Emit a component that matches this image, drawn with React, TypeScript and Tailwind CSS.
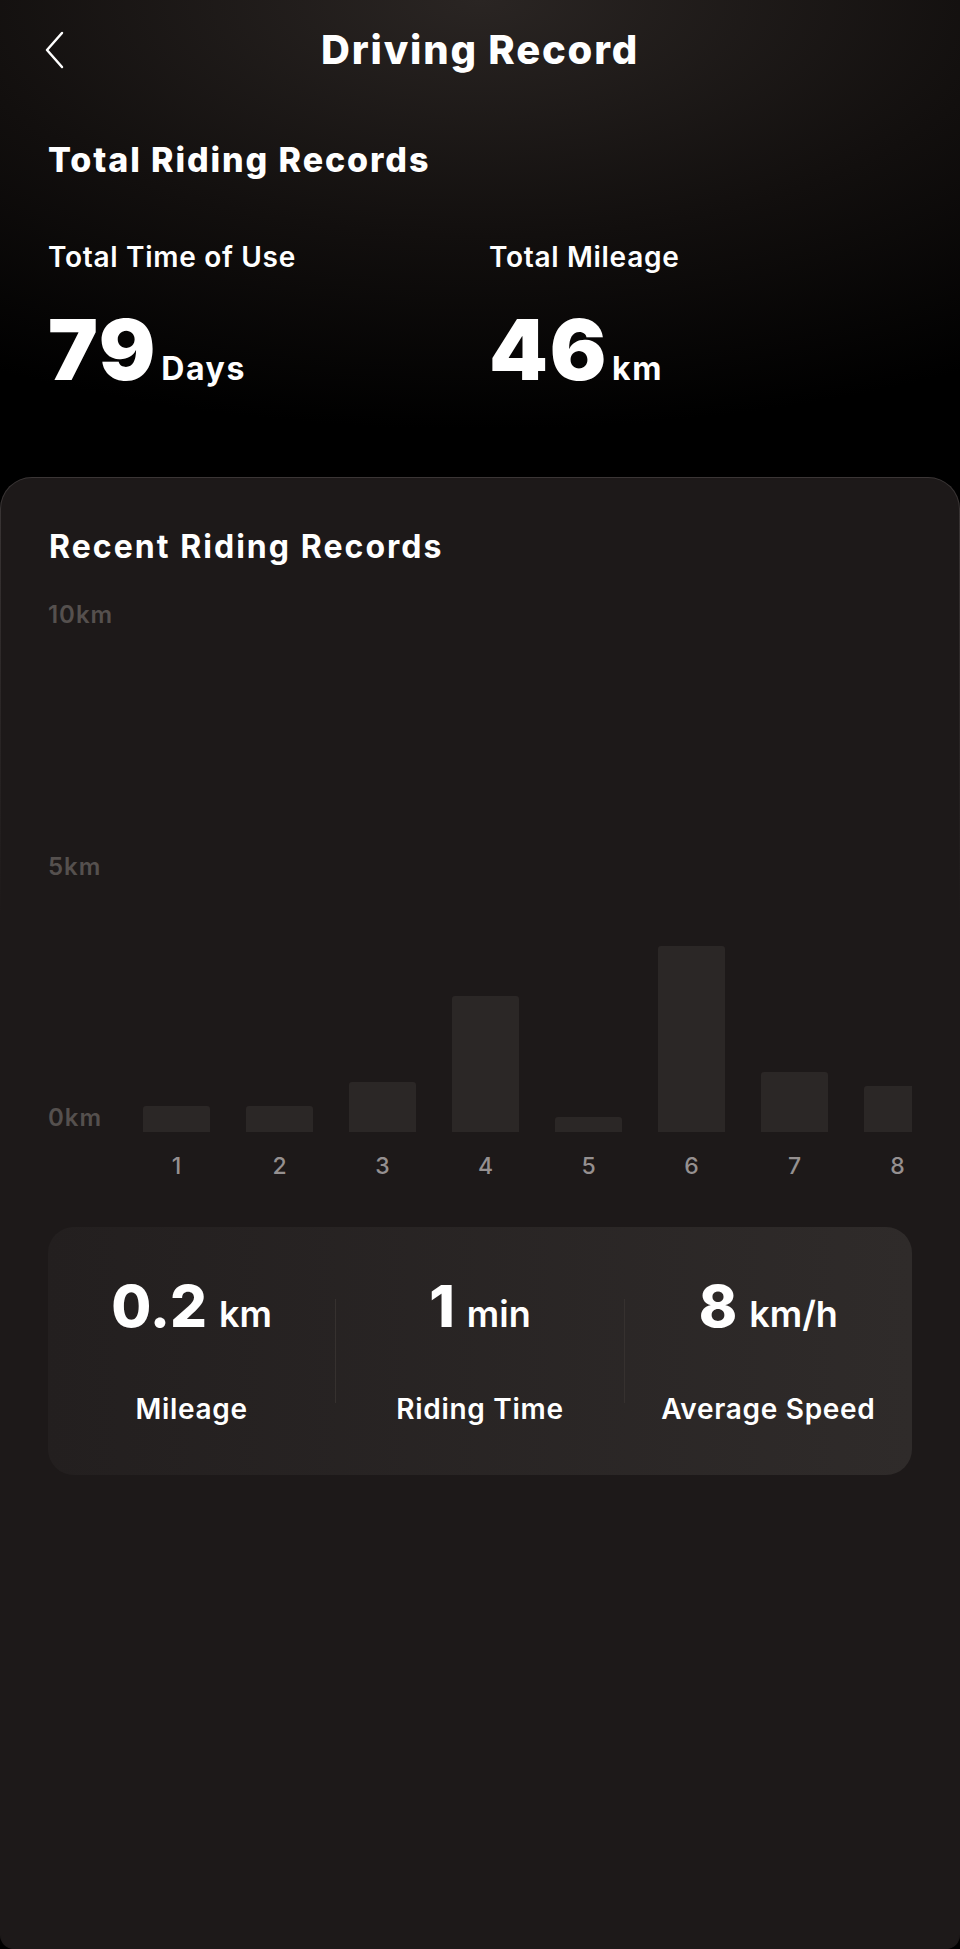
import React from 'react';

const bars = [
  { label: '1', h: 26 },
  { label: '2', h: 26 },
  { label: '3', h: 50 },
  { label: '4', h: 136 },
  { label: '5', h: 15 },
  { label: '6', h: 186 },
  { label: '7', h: 60 },
  { label: '8', h: 46 },
];

const stats = [
  { value: '0.2', unit: 'km', label: 'Mileage' },
  { value: '1', unit: 'min', label: 'Riding Time' },
  { value: '8', unit: 'km/h', label: 'Average Speed' },
];

export default function App() {
  return (
    <div className="flex min-h-[1949px] flex-col bg-black font-['Inter','Noto_Sans',sans-serif] text-white">
      {/* Top: totals */}
      <div className="h-[477px] bg-[radial-gradient(ellipse_100%_90%_at_50%_0%,#2a2523_0%,#120f0e_55%,#000_100%)]">
        <div className="grid h-[100px] grid-cols-[1fr_auto_1fr] items-center">
          <div className="pl-[45px]">
            <svg width="20" height="38" viewBox="0 0 20 38" fill="none">
              <polyline points="17,2 2,19 17,36" stroke="white" strokeWidth="2.5" strokeLinecap="round" strokeLinejoin="round" />
            </svg>
          </div>
          <h1 className="text-[40px] font-extrabold leading-none tracking-[0.045em]">Driving Record</h1>
          <div />
        </div>

        <div className="px-12">
          <h2 className="mt-[43px] text-[34px] font-extrabold leading-none tracking-[0.056em]">Total Riding Records</h2>
          <div className="mt-[66px] grid grid-cols-[441px_1fr]">
            <div>
              <p className="text-[28px] font-semibold leading-none tracking-[0.025em]">Total Time of Use</p>
              <div className="mt-[37px] flex items-baseline">
                <span className="text-[84px] font-black leading-none tracking-[0.02em]">79</span>
                <span className="ml-1 text-[32px] font-bold leading-none tracking-[0.05em]">Days</span>
              </div>
            </div>
            <div>
              <p className="text-[28px] font-semibold leading-none tracking-[0.025em]">Total Mileage</p>
              <div className="mt-[37px] flex items-baseline">
                <span className="text-[84px] font-black leading-none tracking-[0.02em]">46</span>
                <span className="ml-1 text-[32px] font-bold leading-none tracking-[0.05em]">km</span>
              </div>
            </div>
          </div>
        </div>
      </div>

      {/* Recent records card */}
      <div className="flex flex-1 flex-col rounded-t-[32px] rounded-b-[14px] bg-linear-to-b from-[#3b3636] via-[#1d1919] via-30% to-[#1d1919] px-px pt-px">
        <div className="flex-1 rounded-t-[31px] rounded-b-[14px] bg-[#1d1919]">
          <h2 className="pl-12 pt-[53px] text-[32px] font-bold leading-none tracking-[0.064em]">Recent Riding Records</h2>

          <div className="mt-[39px] flex pl-[47px]">
            <div className="flex h-[529px] w-[77px] flex-col justify-between text-[24px] font-semibold leading-[26px] tracking-[0.04em] text-[#55504e]">
              <span>10km</span>
              <span>5km</span>
              <span>0km</span>
            </div>
            <div className="w-[787px] overflow-hidden">
              <div className="flex h-[530px] items-end">
                {bars.map(b => (
                  <div key={b.label} className="flex w-[103px] shrink-0 justify-center">
                    <div className="w-[67px] rounded-t-[3px] bg-[#2b2726]" style={{ height: b.h }} />
                  </div>
                ))}
              </div>
              <div className="mt-[21px] flex">
                {bars.map(b => (
                  <span key={b.label} className="w-[103px] shrink-0 text-center text-[23px] font-medium leading-[26px] text-[#959090]">
                    {b.label}
                  </span>
                ))}
              </div>
            </div>
          </div>

          <div className="mx-[47px] mt-12 flex h-[248px] items-center rounded-[26px] bg-linear-to-r from-[#231f1f] to-[#2f2b2a]">
            {stats.map((s, i) => (
              <React.Fragment key={s.label}>
                {i > 0 && <div className="h-[104px] w-px bg-[#36312f]" />}
                <div className="flex flex-1 flex-col items-center">
                  <div className="flex items-baseline">
                    <span className="text-[58px] font-extrabold leading-none">{s.value}</span>
                    <span className="ml-3 text-[36px] font-semibold leading-none">{s.unit}</span>
                  </div>
                  <p className="mt-[58px] text-[28px] font-semibold leading-[32px] tracking-[0.025em]">{s.label}</p>
                </div>
              </React.Fragment>
            ))}
          </div>
        </div>
      </div>
    </div>
  );
}
